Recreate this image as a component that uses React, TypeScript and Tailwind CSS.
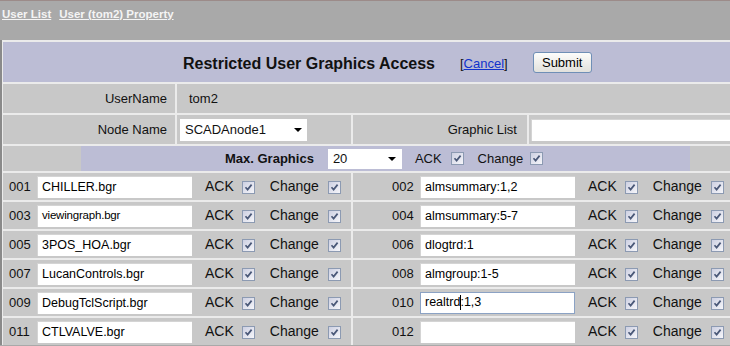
import React from "react";

const font = "font-['Liberation_Sans','Arial',sans-serif]";

const leftRows = [
  { no: "001", val: "CHILLER.bgr" },
  { no: "003", val: "viewingraph.bgr", small: true },
  { no: "005", val: "3POS_HOA.bgr" },
  { no: "007", val: "LucanControls.bgr" },
  { no: "009", val: "DebugTclScript.bgr" },
  { no: "011", val: "CTLVALVE.bgr" },
];

const rightRows = [
  { no: "002", val: "almsummary:1,2" },
  { no: "004", val: "almsummary:5-7" },
  { no: "006", val: "dlogtrd:1" },
  { no: "008", val: "almgroup:1-5" },
  { no: "010", val: "realtrd:1,3", focus: true },
  { no: "012", val: "" },
];

function Check() {
  return (
    <span className="inline-flex w-[13px] h-[13px] shrink-0 items-center justify-center border border-[#8c9ab2] bg-linear-to-br from-[#cdd0e2] to-[#f6f6fa]">
      <svg width="9" height="9" viewBox="0 0 9 9">
        <path d="M1.5 4.3 L3.6 6.6 L7.6 1.6" stroke="#4a5878" strokeWidth="1.7" fill="none" />
      </svg>
    </span>
  );
}

function Arrow() {
  return (
    <svg width="8" height="4" viewBox="0 0 8 4" className="shrink-0">
      <path d="M0 0 H8 L4 4 Z" fill="#000" />
    </svg>
  );
}

function TextBox({ val, small, focus }: { val: string; small?: boolean; focus?: boolean }) {
  // realtrd row shows a caret after "realtrd"
  const parts = focus ? val.split(":") : null;
  return (
    <div
      className={
        "w-[155px] h-[22px] bg-white flex items-center pl-[4px] text-black whitespace-nowrap overflow-hidden " +
        (focus ? "border border-[#8ba2c4] " : "border-t border-l border-[#d4d4d4] ") +
        (small ? "text-[11.5px] tracking-[-0.2px]" : "text-[12.5px]")
      }
    >
      {parts ? (
        <>
          {parts[0]}
          <span className="inline-block w-px h-[15px] bg-black -mr-px" />
          {":" + parts[1]}
        </>
      ) : (
        val
      )}
    </div>
  );
}

function GraphicRow({ no, val, small, focus }: { no: string; val: string; small?: boolean; focus?: boolean }) {
  return (
    <div className="flex items-center">
      <span className="text-[13px] w-[22px]">{no}</span>
      <div className="ml-[6px]">
        <TextBox val={val} small={small} focus={focus} />
      </div>
      <span className="ml-[13px] text-[14px]">ACK</span>
      <span className="ml-[8px]">
        <Check />
      </span>
      <span className="ml-[15px] text-[14px]">Change</span>
      <span className="ml-[9px]">
        <Check />
      </span>
    </div>
  );
}

export default function App() {
  return (
    <div className={"w-[730px] h-[346px] overflow-hidden bg-[#a9a9a9] text-[#111] border-t border-[#9c8b89] " + font}>
      {/* breadcrumb links */}
      <div className="h-[39px] pl-[2px] pt-[5px] text-[11.5px] font-bold text-[#f4f4f4]">
        <a className="underline">User List</a>
        <a className="underline ml-[8px]">User (tom2) Property</a>
      </div>

      <div className="flex flex-col gap-[2px] bg-[#ebebeb] pt-[2px] pl-[1px] border-l-2 border-[#8a8a8a]">
        {/* header */}
        <div className="h-[40px] bg-[#bcbdd5] flex items-center pl-[180px]">
          <span className="text-[16px] font-bold mt-[3px]">Restricted User Graphics Access</span>
          <span className="ml-[25px] text-[13px] mt-[3px]">
            [<a className="underline text-[#1133cc]">Cancel</a>]
          </span>
          <button className="ml-[25px] w-[59px] h-[21px] rounded-[3px] border border-[#6f8fb6] bg-linear-to-b from-[#fdfdfb] to-[#e2e1dc] text-[13px] text-black">
            Submit
          </button>
        </div>

        {/* UserName */}
        <div className="h-[29px] flex gap-[2px]">
          <div className="w-[172px] bg-[#c8c8c8] flex items-center justify-end pr-[8px] text-[13px]">UserName</div>
          <div className="flex-1 bg-[#c8c8c8] flex items-center pl-[12px] text-[13px]">tom2</div>
        </div>

        {/* Node Name / Graphic List */}
        <div className="h-[29px] flex gap-[2px]">
          <div className="w-[172px] bg-[#c8c8c8] flex items-center justify-end pr-[8px] text-[13px]">Node Name</div>
          <div className="w-[174px] bg-[#c8c8c8] flex items-center pl-[3px]">
            <div className="w-[127px] h-[22px] bg-white flex items-center pl-[5px] pr-[5px] text-[13px] justify-between">
              SCADAnode1
              <Arrow />
            </div>
          </div>
          <div className="w-[174px] bg-[#c8c8c8] flex items-center justify-end pr-[10px] text-[13px]">Graphic List</div>
          <div className="flex-1 bg-[#c8c8c8] flex items-center pl-[2px]">
            <div className="flex-1 h-[22px] bg-white border-t border-l border-[#d4d4d4]" />
          </div>
        </div>

        {/* Max. Graphics */}
        <div className="h-[25px] bg-[#c8c8c8] flex">
          <div className="ml-[78px] w-[609px] bg-[#bcbdd5] flex items-center pl-[144px] text-[13px]">
            <span className="font-bold">Max. Graphics</span>
            <div className="ml-[14px] w-[74px] h-[20px] bg-white flex items-center justify-between pl-[5px] pr-[6px]">
              20
              <Arrow />
            </div>
            <span className="ml-[13px]">ACK</span>
            <span className="ml-[9px]">
              <Check />
            </span>
            <span className="ml-[14px]">Change</span>
            <span className="ml-[7px]">
              <Check />
            </span>
          </div>
        </div>

        {/* graphic rows */}
        {leftRows.map((l, i) => (
          <div key={l.no} className="h-[27px] flex gap-[2px]">
            <div className="w-[348px] bg-[#c8c8c8] flex items-center pl-[6px]">
              <GraphicRow {...l} />
            </div>
            <div className="flex-1 bg-[#c8c8c8] flex items-center pl-[39px]">
              <GraphicRow {...rightRows[i]} />
            </div>
          </div>
        ))}
      </div>
    </div>
  );
}
